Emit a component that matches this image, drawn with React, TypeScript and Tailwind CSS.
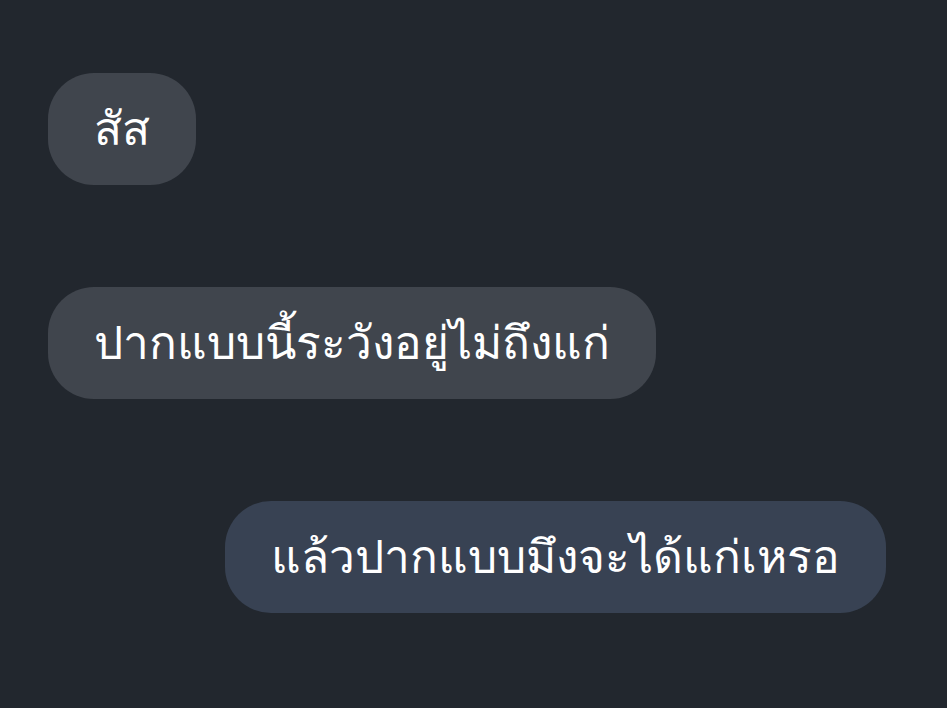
function Bubble({ text, sent }: { text: string; sent?: boolean }) {
  return (
    <div
      className={
        sent
          ? "self-end h-[112px] rounded-[46px] bg-[#384253] px-[46px] flex items-center text-[46px] leading-none"
          : "self-start h-[112px] rounded-[46px] bg-[#40454d] px-[46px] flex items-center text-[46px] leading-none"
      }
    >
      {text}
    </div>
  );
}

export default function App() {
  return (
    <div className="w-[947px] h-[708px] bg-[#22272e] flex flex-col pt-[73px] pl-[48px] pr-[61px] gap-[102px] text-white [font-family:monospace]">
      <Bubble text="สัส" />
      <Bubble text="ปากแบบนี้ระวังอยู่ไม่ถึงแก่" />
      <Bubble text="แล้วปากแบบมึงจะได้แก่เหรอ" sent />
    </div>
  );
}
